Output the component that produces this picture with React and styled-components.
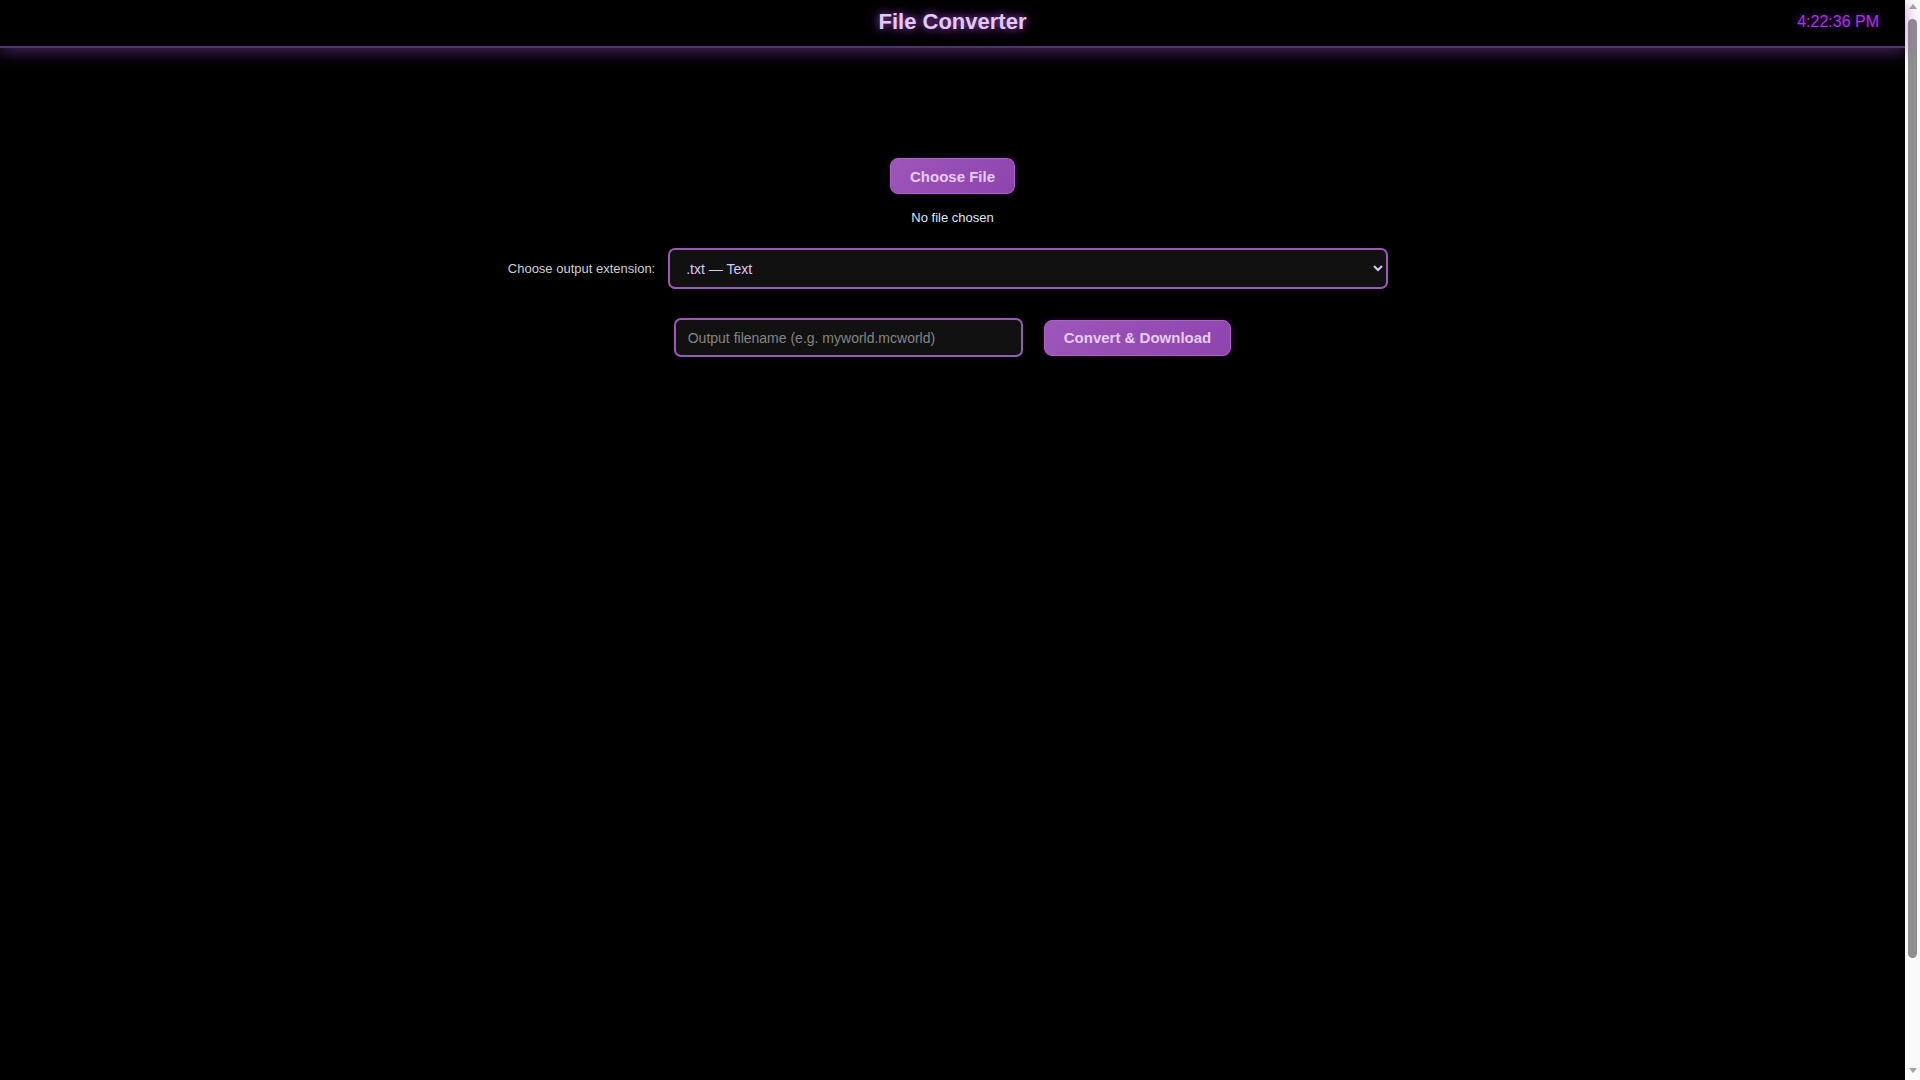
import React, { useState } from 'react';
import styled, { createGlobalStyle } from 'styled-components';

const GlobalStyle = createGlobalStyle`
  html, body {
    margin: 0;
    padding: 0;
    background: #000;
  }
  body {
    font-family: "Liberation Sans", Arial, sans-serif;
    color: #e0e0e0;
  }
  * {
    box-sizing: border-box;
  }
`;

const Shell = styled.div`
  display: flex;
  height: 100vh;
  overflow: hidden;
  background: #000;
`;

const Page = styled.div`
  flex: 1;
  min-width: 0;
  display: flex;
  flex-direction: column;
`;

// looks like the classic browser scrollbar in the screenshot
const ScrollRail = styled.div`
  width: 15px;
  flex-shrink: 0;
  display: flex;
  flex-direction: column;
  align-items: center;
  background: #fafafa;
`;

const Arrow = styled.div`
  height: 15px;
  width: 100%;
  display: flex;
  align-items: ${(p) => (p.$down ? 'flex-end' : 'flex-start')};
  justify-content: center;
  padding: 4px 0 7px;

  &::before {
    content: '';
    border-left: 4.5px solid transparent;
    border-right: 4.5px solid transparent;
    ${(p) => (p.$down ? 'border-top' : 'border-bottom')}: 5px solid #a3a3a3;
  }
`;

const Thumb = styled.div`
  width: 9px;
  height: 939px;
  margin-top: 4px;
  border-radius: 5px;
  background: #8f8f8f;
`;

const RailSpacer = styled.div`
  flex: 1;
`;

const Header = styled.header`
  position: relative;
  height: 48px;
  flex-shrink: 0;
  display: flex;
  align-items: center;
  justify-content: center;
  padding-bottom: 2px;
  border-bottom: 2px solid #553070;
  box-shadow: 0 4px 16px rgba(140, 70, 180, 0.5);
  background: #000;
`;

const Title = styled.h1`
  margin: 0;
  font-size: 22px;
  font-weight: bold;
  color: #e4c8f8;
  text-shadow: 0 0 8px rgba(175, 95, 225, 0.85), 0 0 18px rgba(140, 60, 200, 0.55);
`;

const Clock = styled.div`
  position: absolute;
  right: 26px;
  top: 50%;
  transform: translateY(-58%);
  font-size: 16px;
  color: #a335e0;
  text-shadow: 0 0 6px rgba(150, 40, 210, 0.7);
`;

const Main = styled.main`
  display: flex;
  flex-direction: column;
  align-items: center;
  padding-top: 110px;
`;

const FileBlock = styled.div`
  display: flex;
  flex-direction: column;
  align-items: center;
  gap: 16px;
`;

const HiddenInput = styled.input`
  display: none;
`;

const PurpleButton = styled.button`
  font-family: inherit;
  font-size: 15px;
  font-weight: bold;
  color: #e6ccf8;
  background: linear-gradient(135deg, #9d56ba, #8e44ad);
  border: 1px solid #a865c4;
  border-radius: 8px;
  height: 36px;
  padding: 0 19px;
  cursor: pointer;
  box-shadow: 0 0 6px rgba(142, 68, 173, 0.25);

  &:hover {
    background: linear-gradient(135deg, #a862c6, #9650b8);
  }
`;

const FileLabel = styled(PurpleButton).attrs({ as: 'label' })`
  display: inline-flex;
  align-items: center;
`;

const FileName = styled.div`
  font-size: 13px;
  line-height: 15px;
  color: #dfe7f3;
`;

const ExtRow = styled.div`
  display: flex;
  align-items: center;
  gap: 13px;
  margin-top: 23px;
  margin-right: 9px;
`;

const Label = styled.label`
  font-size: 13px;
  color: #cfcfd6;
`;

const Select = styled.select`
  width: 720px;
  height: 41px;
  padding: 0 8px 0 12px;
  font-family: inherit;
  font-size: 14px;
  color: #d9caf9;
  background: #111;
  border: 2px solid #9b59b6;
  border-radius: 7px;
  outline: none;
`;

const OutputRow = styled.div`
  display: flex;
  align-items: center;
  gap: 21px;
  margin-top: 29px;
`;

const TextInput = styled.input`
  width: 349px;
  height: 39px;
  padding: 0 12px;
  font-family: inherit;
  font-size: 14px;
  color: #e0e0e0;
  background: #111;
  border: 2px solid #9b59b6;
  border-radius: 7px;
  outline: none;

  &::placeholder {
    color: #858585;
  }
`;

const extensions = [
  ['.txt', 'Text'],
  ['.json', 'JSON'],
  ['.csv', 'CSV'],
  ['.md', 'Markdown'],
  ['.html', 'HTML'],
  ['.zip', 'Zip archive'],
  ['.mcworld', 'Minecraft world'],
];

export default function App() {
  const [file, setFile] = useState(null);
  const [ext, setExt] = useState('.txt');
  const [name, setName] = useState('');

  return (
    <>
      <GlobalStyle />
      <Shell>
        <Page>
          <Header>
            <Title>File Converter</Title>
            <Clock>4:22:36 PM</Clock>
          </Header>
          <Main>
            <FileBlock>
              <FileLabel htmlFor="file-input">Choose File</FileLabel>
              <HiddenInput
                id="file-input"
                type="file"
                onChange={(e) => setFile(e.target.files[0] || null)}
              />
              <FileName>{file ? file.name : 'No file chosen'}</FileName>
            </FileBlock>

            <ExtRow>
              <Label htmlFor="ext-select">Choose output extension:</Label>
              <Select id="ext-select" value={ext} onChange={(e) => setExt(e.target.value)}>
                {extensions.map(([value, text]) => (
                  <option key={value} value={value}>
                    {value} — {text}
                  </option>
                ))}
              </Select>
            </ExtRow>

            <OutputRow>
              <TextInput
                placeholder="Output filename (e.g. myworld.mcworld)"
                value={name}
                onChange={(e) => setName(e.target.value)}
              />
              <PurpleButton>Convert &amp; Download</PurpleButton>
            </OutputRow>
          </Main>
        </Page>
        <ScrollRail>
          <Arrow />
          <Thumb />
          <RailSpacer />
          <Arrow $down />
        </ScrollRail>
      </Shell>
    </>
  );
}
